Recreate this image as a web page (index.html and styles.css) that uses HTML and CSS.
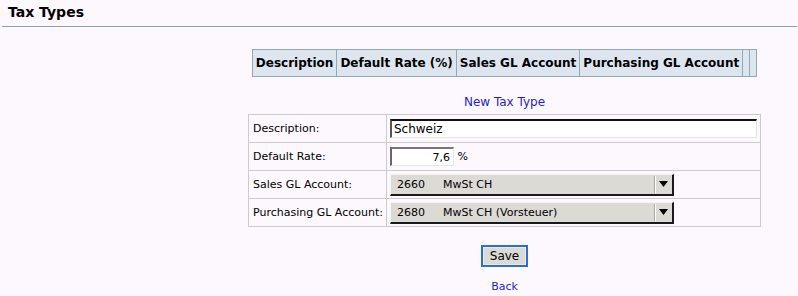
FILE: index.html
```html
<!DOCTYPE html>
<html lang="en">
<head>
    <meta charset="UTF-8">
    <title>Tax Types</title>
    <link rel="stylesheet" href="styles.css">
</head>
<body>
    <div class="page-title">Tax Types</div>

    <div class="content">
        <table class="list-table">
            <tr>
                <th>Description</th>
                <th>Default Rate (%)</th>
                <th>Sales GL Account</th>
                <th>Purchasing GL Account</th>
                <th class="blank"></th>
                <th class="blank"></th>
            </tr>
        </table>

        <a class="link new-link" href="#">New Tax Type</a>

        <table class="form-table">
            <tr>
                <td class="label">Description:</td>
                <td><input class="text-input wide" type="text" value="Schweiz"></td>
            </tr>
            <tr>
                <td class="label">Default Rate:</td>
                <td><input class="text-input rate" type="text" value="7,6"> %</td>
            </tr>
            <tr>
                <td class="label">Sales GL Account:</td>
                <td>
                    <div class="select">
                        <span class="code">2660</span><span class="name">MwSt CH</span>
                        <span class="arrow"><svg width="9" height="6" viewBox="0 0 9 6"><path d="M0 0H9L4.5 6Z" fill="#000"/></svg></span>
                    </div>
                </td>
            </tr>
            <tr>
                <td class="label">Purchasing GL Account:</td>
                <td>
                    <div class="select">
                        <span class="code">2680</span><span class="name">MwSt CH (Vorsteuer)</span>
                        <span class="arrow"><svg width="9" height="6" viewBox="0 0 9 6"><path d="M0 0H9L4.5 6Z" fill="#000"/></svg></span>
                    </div>
                </td>
            </tr>
        </table>

        <button class="save-btn" type="button">Save</button>

        <a class="link back-link" href="#">Back</a>
    </div>
</body>
</html>
```

FILE: styles.css
```css
body {
    margin: 0;
    background-color: #fdf8fe;
    font-family: "DejaVu Sans", Verdana, sans-serif;
    font-size: 11px;
    color: #000;
}
.page-title {
    margin: 0 1px 0 2px;
    padding: 4px 6px 6px;
    font-size: 14px;
    font-weight: bold;
    border-bottom: 1px solid #8ea2ac;
}
.content {
    margin-left: 211px;
    text-align: center;
}
.list-table {
    margin: 22px auto 0;
    border-collapse: collapse;
    border: 1px solid #8fa9b8;
}
.list-table th {
    height: 26px;
    padding: 0 3px;
    font-size: 12px;
    background-color: #dde6ee;
    border: 1px solid #8fa9b8;
    white-space: nowrap;
}
.list-table th.blank {
    width: 0;
    padding: 0 3px;
}
.link {
    color: #1f1fcc;
    text-decoration: none;
}
.new-link {
    display: block;
    margin-top: 19px;
    height: 13px;
    line-height: 13px;
    font-size: 12px;
}
.form-table {
    margin: 5px auto 0;
    border-collapse: collapse;
    border: 1px solid #cbcbcb;
    text-align: left;
}
.form-table td {
    height: 27px;
    padding: 0 3px;
    border: 1px solid #cbcbcb;
    white-space: nowrap;
}
.form-table td.label {
    padding: 0 3px 0 4px;
}
.text-input {
    box-sizing: border-box;
    height: 19px;
    margin: 0;
    padding: 0 3px;
    font-family: inherit;
    font-size: 11px;
    background-color: #fff;
    border-style: solid;
    border-width: 2px 1px 1px 2px;
    border-color: #111 #e4e4e4 #e4e4e4 #555;
    vertical-align: middle;
}
.text-input.wide {
    width: 367px;
    font-size: 12px;
    padding-left: 2px;
}
.text-input.rate {
    width: 64px;
    text-align: right;
    border-color: #777 #e8e8e8 #e8e8e8 #666;
}
.select {
    display: flex;
    align-items: center;
    box-sizing: border-box;
    width: 284px;
    height: 22px;
    padding-left: 6px;
    background-color: #dcdad5;
    border-style: solid;
    border-width: 1px 2px 2px 1px;
    border-color: #f4f3f1 #1a1a1a #1a1a1a #f4f3f1;
}
.select .code {
    width: 46px;
}
.select .name {
    flex: 1;
}
.select .arrow {
    display: flex;
    align-items: center;
    justify-content: center;
    width: 17px;
    height: 17px;
    border-left: 1px solid #a8a6a2;
    box-shadow: inset 1px 0 0 #fff;
}
.save-btn {
    display: block;
    box-sizing: border-box;
    width: 47px;
    height: 22px;
    margin: 18px auto 0;
    padding: 0;
    font-family: inherit;
    font-size: 12px;
    color: #000;
    background-color: #dcdad5;
    border: 2px solid #2a6fd2;
    box-shadow: inset 0 0 0 1px #eceae6;
}
.back-link {
    display: block;
    margin-top: 13px;
}
```
